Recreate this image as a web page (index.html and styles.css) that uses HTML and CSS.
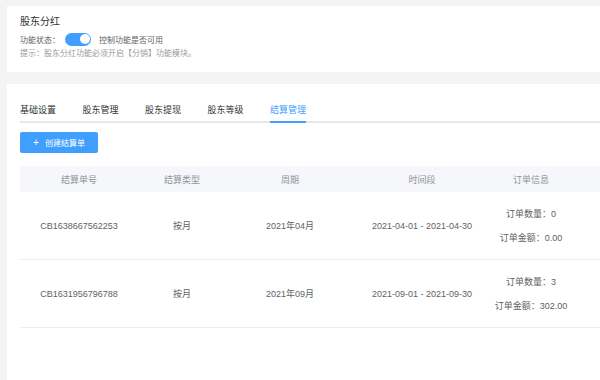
FILE: index.html
```html
<!DOCTYPE html>
<html lang="zh-CN">
<head>
  <meta charset="UTF-8">
  <title>股东分红 - 结算管理</title>
  <link rel="stylesheet" href="styles.css">
</head>
<body>
  <div class="page">
    <div class="card top-card">
      <div class="title">股东分红</div>
      <div class="status-row">
        <span>功能状态：</span>
        <span class="switch on"><span class="knob"></span></span>
        <span class="switch-label">控制功能是否可用</span>
      </div>
      <div class="hint">提示：股东分红功能必须开启【分销】功能模块。</div>
    </div>

    <div class="card main-card">
      <div class="tabs">
        <div class="tab">基础设置</div>
        <div class="tab">股东管理</div>
        <div class="tab">股东提现</div>
        <div class="tab">股东等级</div>
        <div class="tab active">结算管理</div>
      </div>

      <a href="#" class="btn"><span class="plus">+</span>创建结算单</a>

      <table class="grid">
        <colgroup>
          <col style="width:118px">
          <col style="width:88px">
          <col style="width:128px">
          <col style="width:136px">
          <col style="width:82px">
          <col style="width:80px">
        </colgroup>
        <thead>
          <tr>
            <th>结算单号</th>
            <th>结算类型</th>
            <th>周期</th>
            <th>时间段</th>
            <th>订单信息</th>
            <th></th>
          </tr>
        </thead>
        <tbody>
          <tr>
            <td>CB1638667562253</td>
            <td>按月</td>
            <td>2021年04月</td>
            <td>2021-04-01 - 2021-04-30</td>
            <td>
              <div class="info-line">订单数量：0</div>
              <div class="info-line">订单金额：0.00</div>
            </td>
            <td></td>
          </tr>
          <tr>
            <td>CB1631956796788</td>
            <td>按月</td>
            <td>2021年09月</td>
            <td>2021-09-01 - 2021-09-30</td>
            <td>
              <div class="info-line">订单数量：3</div>
              <div class="info-line">订单金额：302.00</div>
            </td>
            <td></td>
          </tr>
        </tbody>
      </table>
    </div>
  </div>
</body>
</html>
```

FILE: styles.css
```css
html, body {
  margin: 0;
  height: 100%;
  overflow: hidden;
}
body {
  background: #f3f4f6;
  font-family: "Liberation Sans", "Noto Sans CJK SC", sans-serif;
  color: #606266;
}
.page {
  padding: 6px 0 0 7px;
}
.card {
  background: white;
}
.top-card {
  height: 66px;
  box-sizing: border-box;
  padding: 9px 13px 0;
}
.title {
  font-size: 10px;
  line-height: 14px;
  color: #303133;
}
.status-row {
  display: flex;
  align-items: center;
  height: 14px;
  margin-top: 3px;
  font-size: 8px;
  color: #606266;
}
.switch {
  position: relative;
  width: 26px;
  height: 13px;
  border-radius: 7px;
  background: #dcdfe6;
  margin: 0 8px 0 5px;
}
.switch.on {
  background: #409eff;
}
.knob {
  position: absolute;
  top: 1.5px;
  left: 1.5px;
  width: 10px;
  height: 10px;
  border-radius: 50%;
  background: white;
}
.switch.on .knob {
  left: 14.5px;
}
.hint {
  margin-top: 1px;
  font-size: 8px;
  line-height: 13px;
  color: #9a9a9a;
}
.main-card {
  margin-top: 12px;
  height: 300px;
  padding-left: 13px;
  overflow: hidden;
}
.tabs {
  display: flex;
  gap: 26.5px;
  padding-top: 15px;
  border-bottom: 2px solid #e4e7ed;
}
.tab {
  font-size: 9px;
  line-height: 22px;
  color: #303133;
  margin-bottom: -2px;
  border-bottom: 2px solid transparent;
}
.tab.active {
  color: #409eff;
  border-bottom-color: #409eff;
}
.btn {
  display: flex;
  align-items: center;
  justify-content: center;
  width: 78px;
  height: 21px;
  margin-top: 9px;
  background: #409eff;
  border-radius: 2px;
  color: white;
  font-size: 8px;
  text-decoration: none;
}
.plus {
  font-size: 10px;
  margin-right: 6px;
}
.grid {
  margin-top: 13px;
  border-collapse: collapse;
  table-layout: fixed;
  width: 632px;
  font-size: 9px;
}
.grid th {
  height: 26px;
  padding: 0;
  background: #f5f7fa;
  color: #909399;
  font-weight: normal;
  text-align: center;
}
.grid td {
  height: 67px;
  padding: 0;
  text-align: center;
  color: #606266;
  border-bottom: 1px solid #ebeef5;
  white-space: nowrap;
}
.info-line {
  line-height: 24px;
}
```
